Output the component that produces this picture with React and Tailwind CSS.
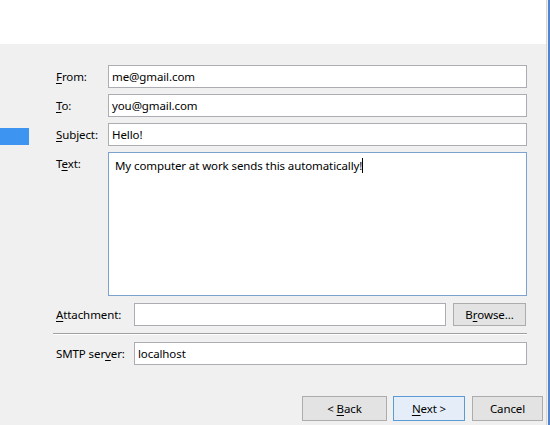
import React from "react";

function U({ children }) {
  return <span className="underline decoration-1 underline-offset-[2px]">{children}</span>;
}

function Field({ children, className = "" }) {
  return (
    <div className={"h-[23px] border border-[#abadb3] bg-white flex items-center pl-[3px] text-black " + className}>
      {children}
    </div>
  );
}

function Btn({ children, className = "", def = false }) {
  return (
    <div
      className={
        "flex items-center justify-center border " +
        (def ? "border-[#5b9bd5] bg-[#e5eef8]" : "border-[#acacac] bg-[#e3e3e3]") +
        " " +
        className
      }
    >
      {children}
    </div>
  );
}

export default function App() {
  return (
    <div className="w-[550px] h-[425px] flex bg-[#f0f0f0] text-[11.5px] tracking-[-0.1px] leading-none text-black font-['Noto_Sans',sans-serif] overflow-hidden">
      <div className="w-[546px] flex flex-col">
        <div className="h-[44px] bg-white shrink-0" />
        <div className="flex-1 flex bg-[#f0f0f0]">
          <div className="w-[53px] shrink-0 pt-[84px]">
            <div className="w-[29px] h-[17px] bg-[#3d95f1]" />
          </div>
          <div className="w-[474px] flex flex-col pt-[21px]">
            <div className="flex items-center h-[23px]">
              <div className="w-[55px] pl-[3px]"><U>F</U>rom:</div>
              <Field className="flex-1">me@gmail.com</Field>
            </div>
            <div className="flex items-center h-[23px] mt-[6px]">
              <div className="w-[55px] pl-[3px]"><U>T</U>o:</div>
              <Field className="flex-1">you@gmail.com</Field>
            </div>
            <div className="flex items-center h-[23px] mt-[6px]">
              <div className="w-[55px] pl-[3px]"><U>S</U>ubject:</div>
              <Field className="flex-1">Hello!</Field>
            </div>
            <div className="flex h-[144px] mt-[6px]">
              <div className="w-[55px] pl-[3px] pt-[6px]">T<U>e</U>xt:</div>
              <div className="flex-1 border border-[#7da2ce] bg-white pl-[6px] pt-[5px]">
                <span>My computer at work sends this automatically!</span>
                <span className="inline-block w-px h-[15px] bg-black align-[-3px]" />
              </div>
            </div>
            <div className="flex items-center h-[23px] mt-[7px]">
              <div className="w-[81px] pl-[3px]"><U>A</U>ttachment:</div>
              <Field className="w-[312px]" />
              <Btn className="w-[73px] h-[23px] ml-[7px]">B<U>r</U>owse...</Btn>
            </div>
            <div className="mt-[7px] h-[2px] border-t border-[#a0a0a0] border-b border-b-white" />
            <div className="flex items-center h-[23px] mt-[7px]">
              <div className="w-[81px] pl-[3px]">SMTP ser<U>v</U>er:</div>
              <Field className="flex-1">localhost</Field>
            </div>
            <div className="flex mt-[31px] w-[490px]">
              <div className="flex-1" />
              <Btn className="w-[85px] h-[25px]">&lt;&nbsp;<U>B</U>ack</Btn>
              <Btn def className="w-[72px] h-[25px] ml-[6px]"><U>N</U>ext &gt;</Btn>
              <Btn className="w-[71px] h-[25px] ml-[7px]">Cancel</Btn>
            </div>
          </div>
        </div>
      </div>
      <div className="w-px bg-[#d8d8d8]" />
      <div className="w-px bg-[#f0f0f0]" />
      <div className="w-[2px] bg-[#5584cf]" />
    </div>
  );
}
